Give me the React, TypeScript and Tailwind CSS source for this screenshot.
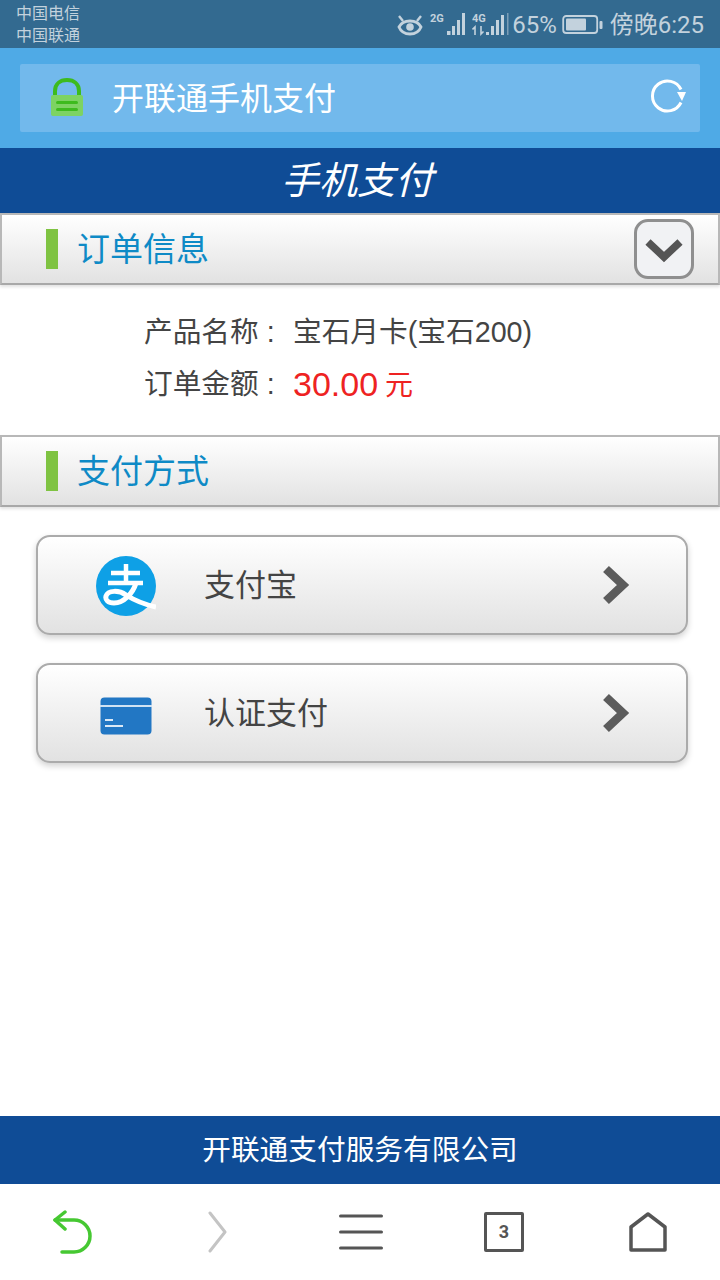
const StatusIcons = () => (
  <div className="flex items-center">
    {/* eye comfort */}
    <svg width="26" height="24" viewBox="0 0 26 24" fill="none" stroke="#c3d2dd" strokeWidth="2.800">
      <path d="M2 14c2-4 6-6 11-6s9 2 11 6c-2 5-6 7-11 7s-9-2-11-7z" />
      <circle cx="13" cy="14" r="3.800" fill="#c3d2dd" stroke="none" />
      <path d="M2 3l4 5M24 3l-4 5" strokeWidth="2.400" />
    </svg>
    <svg width="37" height="26" viewBox="0 0 37 26" fill="#c3d2dd" className="ml-[7px]">
      <text x="0" y="10" fontSize="11" fontWeight="700" fontFamily="Roboto">2G</text>
      <rect x="17" y="19" width="3.500" height="4" />
      <rect x="22" y="14" width="3" height="9" />
      <rect x="27" y="8" width="3" height="15" />
      <rect x="32" y="1" width="3" height="22" />
    </svg>
    <svg width="38" height="26" viewBox="0 0 38 26" fill="#c3d2dd" className="ml-[5px]">
      <text x="0" y="10" fontSize="11" fontWeight="700" fontFamily="Roboto">4G</text>
      <path d="M3 23v-8l-2.500 2.500M9 14v8l2.500-2.500" stroke="#c3d2dd" strokeWidth="1.600" fill="none" />
      <rect x="14" y="20" width="3" height="3" />
      <rect x="19" y="14" width="3" height="9" />
      <rect x="24" y="8" width="3" height="15" />
      <rect x="29" y="3" width="3" height="20" />
      <rect x="35" y="1" width="1.500" height="22" opacity="0.500" />
    </svg>
    <span className="ml-[2px] text-[24px] leading-none text-[#c3d2dd] [font-family:'Roboto',sans-serif]">65%</span>
    <svg width="42" height="22" viewBox="0 0 42 22" fill="none" className="ml-[5px]">
      <rect x="1.200" y="2" width="34" height="17" rx="3" stroke="#c3d2dd" strokeWidth="1.800" />
      <rect x="4" y="4.500" width="20" height="12" rx="1" fill="#c3d2dd" />
      <rect x="37.500" y="7" width="3" height="8" rx="1" fill="#c3d2dd" />
    </svg>
  </div>
);

const SectionHeader = ({ title, toggle }: { title: string; toggle?: boolean }) => (
  <div className="flex h-[72px] items-center border-2 border-[#b8b8b8] border-b-[#a8a8a8] bg-gradient-to-b from-white to-[#e2e2e2] pl-[44px] shadow-[0_2px_3px_rgba(0,0,0,0.12)]">
    <span className="h-[40px] w-[12px] bg-[#7fc342]" />
    <span className="ml-[19px] text-[33px] leading-none text-[#0e8ac6]">{title}</span>
    {toggle && (
      <span className="ml-auto mr-[24px] flex h-[60px] w-[60px] items-center justify-center rounded-[14px] border-[3px] border-[#8f8f8f] bg-[#f1f2f4]">
        <svg width="38" height="28" viewBox="0 0 38 28" fill="none" stroke="#555555" strokeWidth="7.500" className="mt-[3px]">
          <path d="M3 5l16 15 16-15" />
        </svg>
      </span>
    )}
  </div>
);

const PayButton = ({ icon, label }: { icon: React.ReactNode; label: string }) => (
  <div className="flex h-[100px] items-center rounded-[14px] border-2 border-[#ababab] bg-gradient-to-b from-white to-[#e2e2e2] pr-[56px] shadow-[0_3px_6px_rgba(0,0,0,0.18)]">
    <span className="flex w-[166px] justify-center pl-[10px]">{icon}</span>
    <span className="text-[31px] leading-none text-[#444444]">{label}</span>
    <svg width="28" height="40" viewBox="0 0 28 40" fill="none" stroke="#5c5c5c" strokeWidth="8.500" className="ml-auto">
      <path d="M4 4l17 16-17 16" />
    </svg>
  </div>
);

const AlipayIcon = () => (
  <svg width="60" height="60" viewBox="0 0 60 60" className="mt-[2px]">
    <circle cx="30" cy="30" r="30" fill="#0ea0e6" />
    <g fill="none" stroke="#ffffff">
      <path d="M15 17h29M12 27h35M30 8v19" strokeWidth="4.500" />
      <path d="M40 27c-3 10-12 20-22 20-6 0-9-3-8-7 2-6 13-6 20-1 8 5 16 9 30 12" strokeWidth="5" />
    </g>
  </svg>
);

const CardIcon = () => (
  <svg width="52" height="38" viewBox="0 0 52 38" className="mt-[5px]">
    <rect x="0.500" y="0.500" width="51" height="37" rx="4" fill="#2277c4" />
    <rect x="0" y="8" width="52" height="2" fill="#cfe2f3" />
    <rect x="5" y="22" width="8" height="2" fill="#dbe9f6" />
    <rect x="5" y="28" width="18" height="2" fill="#dbe9f6" />
  </svg>
);

export default function App() {
  return (
    <div className="flex h-[1280px] w-[720px] flex-col bg-white [font-family:'Liberation_Sans','Noto_Sans_CJK_SC',sans-serif]">
      {/* status bar */}
      <div className="flex h-[48px] items-center justify-between bg-[#336a90] px-[16px]">
        <div className="pt-[2px] text-[16px] leading-[22px] text-[#c3d2dd]">
          <div>中国电信</div>
          <div>中国联通</div>
        </div>
        <div className="flex items-center pt-[2px]">
          <StatusIcons />
          <span className="ml-[6px] text-[24px] leading-none text-[#c3d2dd] [font-family:'Roboto','Noto_Sans_CJK_SC',sans-serif]">傍晚6:25</span>
        </div>
      </div>

      {/* address bar */}
      <div className="h-[100px] bg-[#4faae6] px-[20px] pt-[16px]">
        <div className="flex h-[68px] items-center rounded-[2px] bg-[#72b9ec] pl-[30px] pr-[14px]">
          <svg width="34" height="40" viewBox="0 0 34 40" fill="none" className="-mt-[2px]">
            <path d="M5 20V14C5 7 10 3 17 3s12 4 12 11v6" stroke="#3dbb1e" strokeWidth="4" />
            <rect x="1" y="18" width="32" height="21" rx="2" fill="#7dd363" />
            <rect x="6" y="24" width="22" height="3" rx="1.500" fill="#3dbb1e" />
            <rect x="6" y="31" width="22" height="3" rx="1.500" fill="#3dbb1e" />
          </svg>
          <span className="ml-[28px] pt-[2px] text-[32px] leading-none text-white">开联通手机支付</span>
          <svg width="36" height="36" viewBox="0 0 36 36" fill="none" className="ml-auto -mt-[2px]">
            <path d="M31 23.500A15 15 0 1 1 31 10.500" stroke="#ffffff" strokeWidth="3" />
            <path d="M27 13h9l-4 9z" fill="#ffffff" />
          </svg>
        </div>
      </div>

      {/* title */}
      <div className="flex h-[65px] items-center justify-center bg-[#0f4c96] pr-[6px] text-[38px] italic leading-none text-white">手机支付</div>

      <SectionHeader title="订单信息" toggle />

      {/* order info */}
      <div className="flex h-[150px] flex-col pl-[144px] pt-[22px] text-[#444444]">
        <div className="flex h-[50px] items-center text-[28.700px] leading-none">
          <span className="w-[149px]">产品名称 :</span>
          <span>宝石月卡(宝石200)</span>
        </div>
        <div className="mt-[2px] flex h-[50px] items-center text-[28.700px] leading-none">
          <span className="w-[149px]">订单金额 :</span>
          <span className="text-[34px] text-[#ee2222]">30.00</span>
          <span className="ml-[7px] mt-[4px] text-[28px] text-[#ee2222]">元</span>
        </div>
      </div>

      <SectionHeader title="支付方式" />

      {/* pay methods */}
      <div className="flex flex-col gap-[28px] pl-[36px] pr-[32px] pt-[28px]">
        <PayButton icon={<AlipayIcon />} label="支付宝" />
        <PayButton icon={<CardIcon />} label="认证支付" />
      </div>

      {/* footer */}
      <div className="mt-auto flex h-[68px] items-center justify-center bg-[#0f4c96] text-[28.700px] leading-none text-white">开联通支付服务有限公司</div>

      {/* browser toolbar */}
      <div className="grid h-[96px] grid-cols-5 items-center justify-items-center">
        <svg width="40" height="44" viewBox="0 0 40 44" fill="none" stroke="#46c832" strokeWidth="3.500" strokeLinecap="round" strokeLinejoin="round">
          <path d="M13 2L3 10l10 9" />
          <path d="M3 10h19a16 16 0 0 1 0 32H10" />
        </svg>
        <svg width="20" height="42" viewBox="0 0 20 42" fill="none" stroke="#c4c4c4" strokeWidth="3" strokeLinecap="round" strokeLinejoin="round" className="ml-[4px]">
          <path d="M2 2l15 19L2 40" />
        </svg>
        <svg width="44" height="38" viewBox="0 0 44 38" fill="none" stroke="#555555" strokeWidth="3" strokeLinecap="round" className="ml-[2px]">
          <path d="M1.500 3h41M1.500 19h41M1.500 35h41" />
        </svg>
        <span className="flex h-[40px] w-[40px] items-center justify-center rounded-[2px] border-[3px] border-[#555555] text-[18px] font-bold leading-none text-[#555555] [font-family:'Roboto',sans-serif]">3</span>
        <svg width="38" height="40" viewBox="0 0 38 40" fill="none" stroke="#555555" strokeWidth="3.500" strokeLinejoin="round">
          <path d="M19 2L2 15v23h34V15z" />
        </svg>
      </div>
    </div>
  );
}
